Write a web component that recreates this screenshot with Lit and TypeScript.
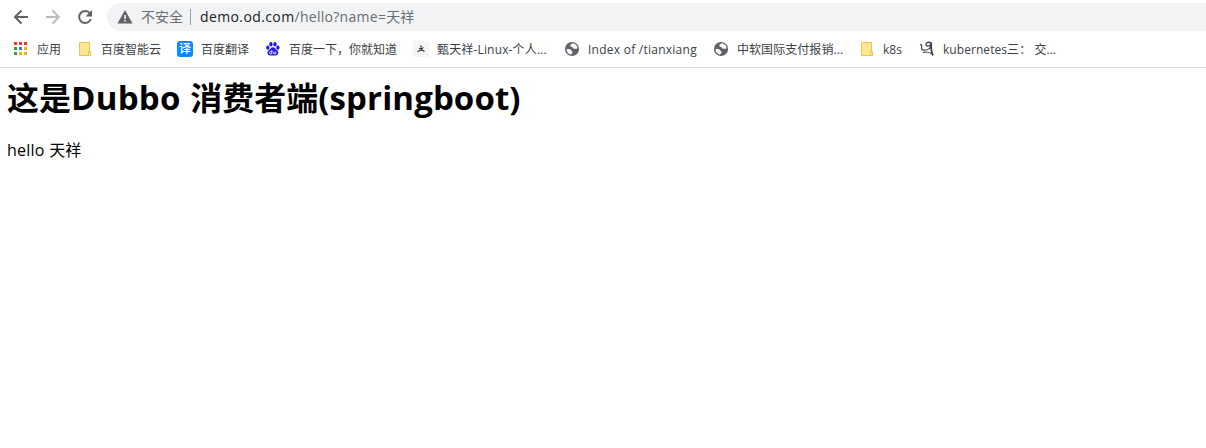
import { LitElement, html, css, svg } from "lit";
import { customElement } from "lit/decorators.js";

const globe = html`<svg width="16" height="16" viewBox="0 0 16 16"><circle cx="8" cy="8" r="7.100" fill="#5f6368"/><path d="M9.200 2.300C7.200 3 6 4 6.300 5c.3.900 1.500.700 2.300 1.200.8.600.5 1.400 1.500 1.600 1 .2 1.900-.400 3.500-.300-.1-2.600-1.800-4.700-4.400-5.200zM2.400 8.200c1.500-.3 3.500-.3 4.300.4.800.7.300 1.400 1.200 1.700 1 .4.900 1.500-.1 2.200-.5.400-.4.900-.8 1.100C4.300 13 2.500 11 2.400 8.200z" fill="#fff"/></svg>`;
const folder = html`<svg width="16" height="16" viewBox="0 0 16 16"><path d="M2.500 1.500h10v9h1v4h-11z" fill="#ffe694" stroke="#e8c64d"/><path d="M11.500 14v-3.500h1.500" fill="none" stroke="#e8c64d"/></svg>`;
const dots = ["#f5342c", "#f5342c", "#f5342c", "#2ea34f", "#2584f5", "#fbb004", "#2ea34f", "#fbb004", "#fbb004"];
const apps = html`<svg width="16" height="16" viewBox="0 0 16 16" shape-rendering="crispEdges">${dots.map((c, i) => svg`<rect x=${1 + (i % 3) * 5} y=${1 + Math.floor(i / 3) * 5} width="3" height="3" fill=${c}/>`)}</svg>`;
const translate = html`<span class="yi">译</span>`;
const paw = html`<svg width="16" height="16" viewBox="-.1 .6 16.500 16.500" fill="#2319dc"><ellipse cx="2.800" cy="7.500" rx="1.700" ry="2.200"/><ellipse cx="6" cy="4" rx="1.700" ry="2.300"/><ellipse cx="10.200" cy="4" rx="1.700" ry="2.300"/><ellipse cx="13.200" cy="7.500" rx="1.700" ry="2.200"/><path d="M8 7C6 7 5.500 9 3.500 10.500 1.500 12 2.500 15.500 5 15.500h6c2.700 0 3.500-3.500 1.700-5C10.500 8.800 10 7 8 7z"/><path d="M7 10v3.800H5.500c-1.200 0-1.200-2.200 0-2.200H7M9 11.300v2.500h2v-2.500" fill="none" stroke="#fff" stroke-width=".9"/></svg>`;
const figure = html`<svg width="16" height="16" viewBox="0 0 16 16"><path d="M0 0h16v16H0z" fill="#f5f5f5"/><path d="M7 5l2 .5M6 7.600l3.500-.5-1.500 2-3.500 1.700M8.300 9l1.500.3 1.700 1.200" fill="none" stroke="#333" stroke-width="1.200"/></svg>`;
const sketch = html`<svg width="16" height="16" viewBox="0 0 16 16" fill="none" stroke="#3e3a3c"><path d="M1 4c1.500-.8 2 .3 1.600 2-.4 2 .6 3.300 2.400 3.200 3 0 6.500-1.500 7-5.200" stroke-width="1.200"/><path d="M12 2.300C10 .3 6.800 1.500 7 3.700c.3 2 3.800 2 4.800-.7" stroke-width="1.300"/><path d="M12.200 1.500c-.3 4-.2 9 1.800 13" stroke-width="1.800"/><path d="M4 11.500c2.500-1 5-.8 8.500 1" stroke-width="1.100"/></svg>`;

const bookmarks = [
  { icon: apps, label: "应用", width: 24, latin: "" },
  { icon: folder, label: "百度智能云", width: 60, latin: "" },
  { icon: translate, label: "百度翻译", width: 48, latin: "" },
  { icon: paw, label: "百度一下，你就知道", width: 108, latin: "" },
  { icon: figure, label: "甄天祥-Linux-个人...", width: 111, latin: "t1" },
  { icon: globe, label: "Index of /tianxiang", width: 109, latin: "t2" },
  { icon: globe, label: "中软国际支付报销...", width: 106, latin: "t3" },
  { icon: folder, label: "k8s", width: 20, latin: "" },
  { icon: sketch, label: "kubernetes三： 交...", width: 114, latin: "t3" },
];

@customElement("app-root")
export class AppRoot extends LitElement {
  static styles = css`
    :host { display: block; height: 448px; overflow: hidden; background: #fff; font-family: "Open Sans", "Noto Sans CJK SC", sans-serif; }
    svg { display: block; flex: none; }
    .toolbar { display: flex; align-items: center; height: 34px; padding-left: 11px; }
    .nav { display: flex; gap: 12px; width: 96px; }
    .address { display: flex; align-items: center; flex: 1; height: 28px; box-sizing: border-box; padding-left: 10px; background: #f1f3f4; border-radius: 14px 0 0 14px; font-size: 14px; line-height: 20px; color: #6a6e72; white-space: pre; }
    .warn { margin-left: 8px; width: 42px; }
    .line { width: 1px; height: 16px; margin: 0 9px 0 7px; background: #9aa0a6; }
    .url { letter-spacing: .28px; }
    .host { color: #202124; letter-spacing: .39px; }
    .cjk { letter-spacing: 0; }
    .bookmarks { display: flex; align-items: center; gap: 16px; height: 34px; padding: 0 0 3px 13px; border-bottom: 1px solid #dadce0; box-sizing: border-box; }
    .item { display: flex; align-items: center; gap: 8px; height: 16px; }
    .label { padding-top: 2px; font-size: 12px; line-height: 16px; color: #3c4043; white-space: pre; }
    .t1 { letter-spacing: .16px; }
    .t2 { letter-spacing: .25px; }
    .t3 { letter-spacing: .06px; }
    .yi { width: 16px; height: 16px; border-radius: 3px; background: #1485fa; color: #fff; font-size: 12px; line-height: 15px; text-align: center; font-weight: 500; }
    main { padding: 8px 7px; color: #000; }
    h1 { margin: 0; height: 43px; font-size: 32px; line-height: 43px; white-space: pre; }
    .name { font-size: 33px; letter-spacing: .25px; word-spacing: .9px; }
    .stack { font-size: 33px; letter-spacing: .1px; }
    p { margin: 21px 0 0; font-size: 16px; line-height: 21px; white-space: pre; }
    .greet { letter-spacing: .2px; word-spacing: .4px; }
  `;
  render() {
    return html`
      <div class="toolbar">
        <div class="nav">
          <svg width="20" height="20" viewBox="0 0 20 20" fill="none" stroke="#5f6368" stroke-width="2"><path d="M17 10H4M10.500 3.500L4 10l6.500 6.500"/></svg>
          <svg width="20" height="20" viewBox="0 0 20 20" fill="none" stroke="#babcbe" stroke-width="2"><path d="M3 10h13M9.500 3.500L16 10l-6.500 6.500"/></svg>
          <svg width="20" height="20" viewBox="0 0 20 20"><path d="M15 6.500A6 6 0 1 0 15.800 12" fill="none" stroke="#5f6368" stroke-width="2"/><path d="M17 3v6.500h-6.500z" fill="#5f6368"/></svg>
        </div>
        <div class="address">
          <svg width="16" height="16" viewBox="0 0 16 16"><path d="M8 1l7.500 13.500H.5z" fill="#5f6368"/><path d="M7.300 6h1.500v4H7.300zM7.300 11h1.500v1.500H7.300z" fill="#fff"/></svg>
          <span class="warn">不安全</span><span class="line"></span><span class="url"><span class="host">demo.od.com</span>/hello?name=<span class="cjk">天祥</span></span>
        </div>
      </div>
      <nav class="bookmarks">
        ${bookmarks.map((b) => html`<div class="item">${b.icon}<span class="label ${b.latin}" style="width:${b.width}px">${b.label}</span></div>`)}
      </nav>
      <main>
        <h1>这是<span class="name">Dubbo </span>消费者端<span class="stack">(springboot)</span></h1>
        <p><span class="greet">hello </span>天祥</p>
      </main>`;
  }
}
